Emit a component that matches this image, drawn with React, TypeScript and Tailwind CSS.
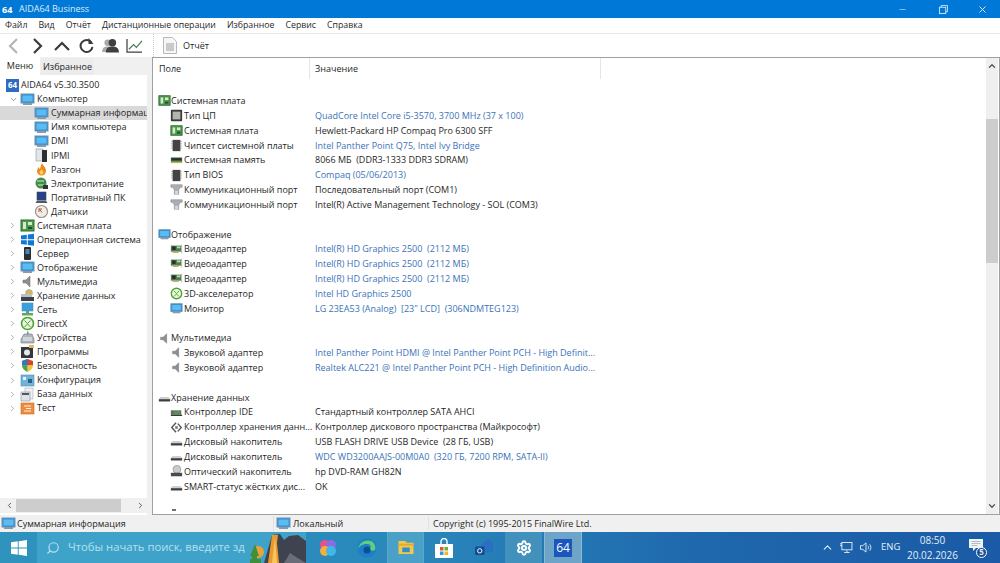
import { ChevronDown, ChevronLeft, ChevronRight, ChevronUp, Search, Settings, X, Minus } from "lucide-react";

type IconKind =
  | "pc" | "board" | "cpu" | "chip" | "ram" | "port" | "gpu" | "xbox" | "sound"
  | "hdd" | "ide" | "ctrl" | "dvd" | "win" | "server" | "fire" | "power" | "laptop"
  | "gauge" | "ipmi" | "storage" | "net" | "device" | "prog" | "shield" | "conf" | "db" | "test";

function TreeIcon({ kind, small }: { kind: IconKind; small?: boolean }) {
  const box = small ? "w-[13px] h-[13px] shrink-0" : "w-[15px] h-[15px] shrink-0";
  switch (kind) {
    case "pc":
      return (
        <svg viewBox="0 0 15 15" className={box}>
          <rect x="1" y="2" width="13" height="9" fill="#2f8fd8" stroke="#6f93b0" />
          <rect x="2.500" y="3.500" width="10" height="6" fill="#5cbcf2" />
          <rect x="3" y="11" width="9" height="2" fill="#8b9aa6" />
        </svg>
      );
    case "board":
      return (
        <svg viewBox="0 0 15 15" className={box}>
          <rect x="1" y="2" width="13" height="11" fill="#4c9a4c" stroke="#2e6b2e" />
          <rect x="3" y="4" width="3" height="7" fill="#d6e8cf" />
          <rect x="8" y="4" width="4" height="3" fill="#d6e8cf" />
          <rect x="8" y="9" width="4" height="2" fill="#1f4f2a" />
        </svg>
      );
    case "cpu":
      return (
        <svg viewBox="0 0 15 15" className={box}>
          <rect x="1" y="1" width="13" height="13" rx="1" fill="#3a3a3a" />
          <rect x="3" y="3" width="9" height="9" fill="#b5b5b0" />
        </svg>
      );
    case "chip":
      return (
        <svg viewBox="0 0 15 15" className={box}>
          <rect x="3" y="1" width="9" height="13" fill="#444" />
          <path d="M1.500 3h1.500M1.500 5.500h1.500M1.500 8h1.500M1.500 10.500h1.500M12 3h1.500M12 5.500h1.500M12 8h1.500M12 10.500h1.500" stroke="#888" />
        </svg>
      );
    case "ram":
      return (
        <svg viewBox="0 0 15 15" className={box}>
          <rect x="1" y="4" width="13" height="5" fill="#2e6b35" />
          <rect x="2" y="5" width="11" height="2" fill="#2b2b2b" />
          <rect x="1" y="9" width="13" height="1.500" fill="#c9b04a" />
        </svg>
      );
    case "port":
      return (
        <svg viewBox="0 0 15 15" className={box}>
          <path d="M1 2h13v3h-2l-2 3v5H5V8L3 5H1z" fill="#a8aeb3" stroke="#7d858c" strokeWidth="0.600" />
          <rect x="6" y="9" width="3" height="4" fill="#d9dcdf" />
        </svg>
      );
    case "gpu":
      return (
        <svg viewBox="0 0 15 15" className={box}>
          <rect x="1" y="3" width="12" height="7" fill="#4f7f52" />
          <rect x="2.500" y="4" width="4" height="4" fill="#2b2b2b" />
          <rect x="8" y="4" width="4" height="2" fill="#c6d4b8" />
          <rect x="13" y="2" width="1" height="10" fill="#aab0b5" />
          <rect x="3" y="10" width="7" height="1.500" fill="#c9b04a" />
        </svg>
      );
    case "xbox":
      return (
        <svg viewBox="0 0 15 15" className={box}>
          <circle cx="7.500" cy="7.500" r="6" fill="#e8f5e0" stroke="#4aa52e" strokeWidth="1.600" />
          <path d="M4.500 4.500 7.500 7.500 10.500 4.500M4.500 11 7.500 8l3 3" stroke="#4aa52e" fill="none" />
        </svg>
      );
    case "sound":
      return (
        <svg viewBox="0 0 15 15" className={box}>
          <path d="M3 6h3l4-4v11l-4-4H3z" fill="#8e8e8e" stroke="#6b6b6b" strokeWidth="0.500" />
        </svg>
      );
    case "hdd":
      return (
        <svg viewBox="0 0 15 15" className={box}>
          <path d="M3 7h9l2 2v3H1V9z" fill="#cfcfcf" />
          <rect x="1" y="9.500" width="13" height="2.500" fill="#3e3e3e" />
        </svg>
      );
    case "ide":
      return (
        <svg viewBox="0 0 15 15" className={box}>
          <rect x="1" y="5" width="12" height="5" fill="#666" />
          <rect x="4" y="6" width="8" height="3" fill="#4c9a4c" />
          <rect x="1" y="10" width="13" height="1.500" fill="#333" />
        </svg>
      );
    case "ctrl":
      return (
        <svg viewBox="0 0 15 15" className={box}>
          <path d="M7 2 2 7.500 7 13M9 3l4 4.500L9 12" stroke="#555" strokeWidth="1.600" fill="none" />
          <rect x="6" y="6" width="3" height="3" fill="#777" />
        </svg>
      );
    case "dvd":
      return (
        <svg viewBox="0 0 15 15" className={box}>
          <circle cx="8" cy="5" r="4.500" fill="#c9ccd0" stroke="#9a9ea3" />
          <rect x="1" y="9" width="13" height="4" fill="#4a4a4a" />
        </svg>
      );
    case "win":
      return (
        <svg viewBox="0 0 15 15" className={box}>
          <path d="M1 3.500 6.800 2.700v4.500H1zM7.800 2.500 14 1.700v5.500H7.800zM1 8.200h5.800v4.500L1 11.900zM7.800 8.200H14v5.500l-6.200-.8z" fill="#0f78d4" />
        </svg>
      );
    case "server":
      return (
        <svg viewBox="0 0 15 15" className={box}>
          <rect x="4" y="1" width="7" height="13" rx="1" fill="#2d2f33" />
          <rect x="5.500" y="3" width="4" height="5" fill="#4d86b5" />
        </svg>
      );
    case "fire":
      return (
        <svg viewBox="0 0 15 15" className={box}>
          <path d="M8 1c1 3 4 4 4 8a4.500 4.500 0 0 1-9 0c0-2 1-3 2-4 0 1 .5 2 1 2 .5-2 1-4 2-6z" fill="#ee8a1d" />
          <path d="M7.500 7c.5 1.500 2 2 2 3.500a2 2 0 0 1-4 0c0-1.500 1.500-2 2-3.500z" fill="#f7cf5a" />
        </svg>
      );
    case "power":
      return (
        <svg viewBox="0 0 15 15" className={box}>
          <circle cx="7" cy="7" r="5.500" fill="#3f8f45" />
          <path d="M3 5h7M4 9h6" stroke="#d8e8cf" />
          <rect x="9" y="9" width="5" height="4" fill="#333" />
        </svg>
      );
    case "laptop":
      return (
        <svg viewBox="0 0 15 15" className={box}>
          <rect x="3" y="2" width="9" height="8" fill="#25408f" stroke="#444" strokeWidth="0.600" />
          <path d="M1.500 13 3 10.500h9l1.500 2.500z" fill="#555a66" />
        </svg>
      );
    case "gauge":
      return (
        <svg viewBox="0 0 15 15" className={box}>
          <circle cx="7.500" cy="7.500" r="6" fill="#f1ede6" stroke="#9c9488" strokeWidth="1.200" />
          <path d="M5 4.500 8 8.500M5 8V5h3" stroke="#a8584a" fill="none" />
        </svg>
      );
    case "ipmi":
      return (
        <svg viewBox="0 0 15 15" className={box}>
          <rect x="2" y="1" width="7" height="12" fill="#e4e7ea" stroke="#8b9299" strokeWidth="0.600" />
          <rect x="8" y="2" width="5" height="12" fill="#2c3035" />
        </svg>
      );
    case "storage":
      return (
        <svg viewBox="0 0 15 15" className={box}>
          <circle cx="9" cy="5" r="3.500" fill="#d7b75a" stroke="#99a" strokeWidth="0.500" />
          <rect x="1" y="6" width="11" height="3" fill="#b9c0c7" />
          <rect x="1" y="9" width="13" height="4" fill="#3e4247" />
        </svg>
      );
    case "net":
      return (
        <svg viewBox="0 0 15 15" className={box}>
          <rect x="2" y="1" width="11" height="8" fill="#39a0e0" stroke="#5c8bad" strokeWidth="0.600" />
          <rect x="6" y="9" width="3" height="2" fill="#7c8b96" />
          <rect x="2" y="11" width="11" height="2.500" fill="#5fa860" />
        </svg>
      );
    case "device":
      return (
        <svg viewBox="0 0 15 15" className={box}>
          <path d="M1 9 4 4h8l2 5v4H1z" fill="#aeb6bd" stroke="#737b83" strokeWidth="0.600" />
          <path d="M3 8h9M3 10h9" stroke="#f2f4f5" />
          <rect x="7" y="1.500" width="1.500" height="3" fill="#808890" />
        </svg>
      );
    case "prog":
      return (
        <svg viewBox="0 0 15 15" className={box}>
          <rect x="1" y="3" width="12" height="11" fill="#34373c" />
          <circle cx="7" cy="8.500" r="3" fill="#e6e9ec" />
          <rect x="9" y="1" width="5" height="3" fill="#e3b85f" />
        </svg>
      );
    case "shield":
      return (
        <svg viewBox="0 0 15 15" className={box}>
          <path d="M7.500 1 13 3v4.500H2V3z" fill="#d8452d" />
          <path d="M7.500 1v6.500H2V3z" fill="#2e79c7" />
          <path d="M7.500 7.500H13c0 3-2.500 5.100-5.500 6.500z" fill="#f0c53a" />
          <path d="M2 7.500h5.500V14C4.500 12.600 2 10.500 2 7.500z" fill="#4aa34a" />
        </svg>
      );
    case "conf":
      return (
        <svg viewBox="0 0 15 15" className={box}>
          <rect x="1" y="2" width="13" height="11" fill="#6db4df" stroke="#5a8aa8" strokeWidth="0.600" />
          <rect x="3" y="4" width="3" height="3" fill="#eaf4fa" />
          <rect x="8" y="6" width="4" height="4" fill="#2d5f87" />
        </svg>
      );
    case "db":
      return (
        <svg viewBox="0 0 15 15" className={box}>
          <rect x="5" y="1" width="8" height="11" fill="#eef0f2" stroke="#a9adb2" strokeWidth="0.600" />
          <rect x="1" y="5" width="9" height="9" fill="#dfe3e7" stroke="#8b9096" strokeWidth="0.600" />
          <rect x="2" y="6" width="7" height="2" fill="#4f5a66" />
        </svg>
      );
    default:
      return (
        <svg viewBox="0 0 15 15" className={box}>
          <rect x="1" y="2" width="13" height="11" fill="#f08a3c" stroke="#d06a20" strokeWidth="0.600" />
          <path d="M4 5h7M6 7.500h5M4 10h7" stroke="#fff3e3" />
        </svg>
      );
  }
}

const subItems: [IconKind, string][] = [
  ["pc", "Суммарная информация"],
  ["pc", "Имя компьютера"],
  ["pc", "DMI"],
  ["ipmi", "IPMI"],
  ["fire", "Разгон"],
  ["power", "Электропитание"],
  ["laptop", "Портативный ПК"],
  ["gauge", "Датчики"],
];

const topItems: [IconKind, string][] = [
  ["board", "Системная плата"],
  ["win", "Операционная система"],
  ["server", "Сервер"],
  ["pc", "Отображение"],
  ["sound", "Мультимедиа"],
  ["storage", "Хранение данных"],
  ["net", "Сеть"],
  ["xbox", "DirectX"],
  ["device", "Устройства"],
  ["prog", "Программы"],
  ["shield", "Безопасность"],
  ["conf", "Конфигурация"],
  ["db", "База данных"],
  ["test", "Тест"],
];

type Row = { icon: IconKind; field: string; value: string; link?: boolean };
type Section = { icon: IconKind; title: string; rows: Row[] };

const sections: Section[] = [
  {
    icon: "board",
    title: "Системная плата",
    rows: [
      { icon: "cpu", field: "Тип ЦП", value: "QuadCore Intel Core i5-3570, 3700 MHz (37 x 100)", link: true },
      { icon: "board", field: "Системная плата", value: "Hewlett-Packard HP Compaq Pro 6300 SFF" },
      { icon: "chip", field: "Чипсет системной платы", value: "Intel Panther Point Q75, Intel Ivy Bridge", link: true },
      { icon: "ram", field: "Системная память", value: "8066 МБ  (DDR3-1333 DDR3 SDRAM)" },
      { icon: "chip", field: "Тип BIOS", value: "Compaq (05/06/2013)", link: true },
      { icon: "port", field: "Коммуникационный порт", value: "Последовательный порт (COM1)" },
      { icon: "port", field: "Коммуникационный порт", value: "Intel(R) Active Management Technology - SOL (COM3)" },
    ],
  },
  {
    icon: "pc",
    title: "Отображение",
    rows: [
      { icon: "gpu", field: "Видеоадаптер", value: "Intel(R) HD Graphics 2500  (2112 МБ)", link: true },
      { icon: "gpu", field: "Видеоадаптер", value: "Intel(R) HD Graphics 2500  (2112 МБ)", link: true },
      { icon: "gpu", field: "Видеоадаптер", value: "Intel(R) HD Graphics 2500  (2112 МБ)", link: true },
      { icon: "xbox", field: "3D-акселератор", value: "Intel HD Graphics 2500", link: true },
      { icon: "pc", field: "Монитор", value: "LG 23EA53 (Analog)  [23\" LCD]  (306NDMTEG123)", link: true },
    ],
  },
  {
    icon: "sound",
    title: "Мультимедиа",
    rows: [
      { icon: "sound", field: "Звуковой адаптер", value: "Intel Panther Point HDMI @ Intel Panther Point PCH - High Definit...", link: true },
      { icon: "sound", field: "Звуковой адаптер", value: "Realtek ALC221 @ Intel Panther Point PCH - High Definition Audio...", link: true },
    ],
  },
  {
    icon: "hdd",
    title: "Хранение данных",
    rows: [
      { icon: "ide", field: "Контроллер IDE", value: "Стандартный контроллер SATA AHCI" },
      { icon: "ctrl", field: "Контроллер хранения данн...", value: "Контроллер дискового пространства (Майкрософт)" },
      { icon: "hdd", field: "Дисковый накопитель", value: "USB FLASH DRIVE USB Device  (28 ГБ, USB)" },
      { icon: "hdd", field: "Дисковый накопитель", value: "WDC WD3200AAJS-00M0A0  (320 ГБ, 7200 RPM, SATA-II)", link: true },
      { icon: "dvd", field: "Оптический накопитель", value: "hp DVD-RAM GH82N" },
      { icon: "hdd", field: "SMART-статус жёстких дис...", value: "OK" },
    ],
  },
];

const menuItems = ["Файл", "Вид", "Отчёт", "Дистанционные операции", "Избранное", "Сервис", "Справка"];

function Logo64({ className }: { className: string }) {
  return <div className={`flex items-center justify-center font-bold ${className}`}>64</div>;
}

function TreeNav() {
  return (
    <div className="flex w-[147px] flex-col">
      <div className="flex h-[18px] items-end">
        <div className="flex h-[18px] w-[40px] items-center justify-center bg-white">Меню</div>
        <div className="ml-[1px] flex h-[17px] w-[53px] items-center justify-center bg-[#ececec]">Избранное</div>
      </div>
      <div className="flex min-h-0 flex-1 flex-col bg-white">
        <div className="min-h-0 flex-1 overflow-hidden pt-[3px]">
          <div className="flex h-[14.050px] items-center gap-[1px] pl-[6px]">
            <Logo64 className="h-[13px] w-[13px] bg-[#2d6cc0] text-[8px] text-white" />
            <span className="pl-[1px]">AIDA64 v5.30.3500</span>
          </div>
          <div className="flex h-[14.050px] items-center pl-[9px]">
            <ChevronDown size={9} strokeWidth={1.500} className="mr-[2px] text-gray-600" />
            <TreeIcon kind="pc" />
            <span className="pl-[2px]">Компьютер</span>
          </div>
          {subItems.map(([icon, label], i) => (
            <div key={label} className={`flex h-[14.050px] items-center pl-[34px] ${i === 0 ? "bg-[#d9d9d9]" : ""}`}>
              <TreeIcon kind={icon} />
              <span className="overflow-hidden whitespace-nowrap pl-[2px]">{label}</span>
            </div>
          ))}
          {topItems.map(([icon, label]) => (
            <div key={label} className="flex h-[14.050px] items-center whitespace-nowrap pl-[8px]">
              <ChevronRight size={9} strokeWidth={1.500} className="mr-[3px] text-gray-500" />
              <TreeIcon kind={icon} />
              <span className="pl-[2px]">{label}</span>
            </div>
          ))}
        </div>
        <div className="mb-[2px] flex h-[15px] items-center bg-[#f0f0f0] text-gray-600">
          <ChevronLeft size={9} strokeWidth={2.500} className="ml-[5px]" />
          <div className="ml-[2px] h-[13px] w-[105px] bg-[#cdcdcd]" />
          <ChevronRight size={9} strokeWidth={2.500} className="ml-auto mr-[2px]" />
        </div>
      </div>
    </div>
  );
}

function ReportTable() {
  return (
    <div className="ml-[5px] flex min-w-0 flex-1 border border-[#a0a0a0] bg-white">
      <div className="min-w-0 flex-1 overflow-hidden">
        <div className="flex h-[21px] items-center">
          <div className="w-[157px] border-r border-[#e5e5e5] pl-[6px] leading-[21px]">Поле</div>
          <div className="w-[291px] border-r border-[#e5e5e5] pl-[5px] leading-[21px]">Значение</div>
        </div>
        <div className="pt-[14.500px]">
          {sections.map((s) => (
            <div key={s.title} className="mb-[14.800px]">
              <div className="flex h-[14.830px] items-center pl-[5px]">
                <TreeIcon kind={s.icon} small />
                <span>{s.title}</span>
              </div>
              {s.rows.map((r, i) => (
                <div key={i} className="flex h-[14.830px] items-center whitespace-nowrap">
                  <div className="flex w-[162px] items-center pl-[17px]">
                    <TreeIcon kind={r.icon} small />
                    <span className="pl-[1px]">{r.field}</span>
                  </div>
                  <span className={`whitespace-pre ${r.link ? "text-[#3a73b8]" : ""}`}>{r.value}</span>
                </div>
              ))}
            </div>
          ))}
          <div className="ml-[19px] mt-[4px] h-[2px] w-[4px] bg-gray-500" />
        </div>
      </div>
      <div className="flex w-[12px] flex-col items-center bg-[#efefef]">
        <ChevronUp size={10} strokeWidth={3} className="mt-[3px] text-gray-600" />
        <div className="mt-[48px] h-[144px] w-full bg-[#cdcdcd]" />
        <ChevronDown size={10} strokeWidth={3} className="mb-[3px] mt-auto text-gray-600" />
      </div>
      <div className="w-[1px] bg-white" />
    </div>
  );
}

function Taskbar() {
  return (
    <div className="flex h-[31px] items-center bg-[linear-gradient(90deg,#2f93bd_0%,#2a88bb_40%,#1f68ad_70%,#1a5aa6_100%)] text-white">
      <div className="flex w-[37px] justify-center">
        <svg viewBox="0 0 16 16" className="h-[16px] w-[16px]">
          <path d="M0 2.300 6.800 1.300v6.300H0zM7.700 1.200 16 0v7.600H7.700zM0 8.400h6.800v6.300L0 13.700zM7.700 8.400H16V16l-8.300-1.200z" fill="#fff" />
        </svg>
      </div>
      <div className="flex h-full w-[269px] items-center overflow-hidden bg-[#3fa3c9] pl-[9px] text-[11.250px] text-[#b5e0ef]">
        <Search size={14} className="mr-[8px] -scale-x-100" />
        <span className="whitespace-nowrap">Чтобы начать поиск, введите зд</span>
      </div>
      <svg viewBox="0 0 56 31" className="-ml-[56px] h-[31px] w-[56px] shrink-0">
        <path d="M14 31 22 3l8-1 4 6 5-4 9-1 8 6v22z" fill="#3f4350" />
        <path d="M22 3h6l-1 8 2 20H18z" fill="#e89a2e" />
        <path d="M25 5l2 26h-5z" fill="#f6c65a" />
        <circle cx="8" cy="20" r="6" fill="#e8a33a" />
        <path d="M5 12 9 24H7v3h4v4H-1v-4h3v-3H0z" fill="#3f8f3a" />
        <path d="M34 31l6-10 6 4 10 6z" fill="#6a6c78" />
      </svg>
      <div className="ml-[13px] flex h-full items-center">
        <svg viewBox="0 0 18 18" className="h-[18px] w-[18px]">
          <circle cx="6" cy="6" r="5" fill="#e94f8a" />
          <circle cx="12" cy="6" r="5" fill="#8a6ee0" />
          <circle cx="6" cy="12" r="5" fill="#f2b13a" />
          <circle cx="12" cy="12" r="5" fill="#3fb8e8" />
        </svg>
        <svg viewBox="0 0 20 20" className="ml-[20px] h-[20px] w-[20px]">
          <circle cx="10" cy="10" r="9.500" fill="#1c7fc9" />
          <path d="M1 11C2 4 9 1 14 3c4 2 5 6 4 9-1 1-5 1-6-1 3-2 2-5-2-5-4 0-8 2-9 5z" fill="#5ed07a" />
          <circle cx="10" cy="12" r="3.500" fill="#0f4f90" />
        </svg>
        <div className="ml-[10px] flex h-full w-[37px] items-center justify-center border-x border-[#5aa7cb] bg-[#4ba0c8]">
          <svg viewBox="0 0 18 16" className="h-[15px] w-[18px]">
            <path d="M1 1h7l2 2h7v12H1z" fill="#f0c84a" />
            <rect x="5" y="8" width="8" height="5" fill="#2f8fc8" />
            <rect x="1" y="4" width="16" height="2" fill="#e5a92e" />
          </svg>
        </div>
        <svg viewBox="0 0 18 20" className="ml-[11px] h-[20px] w-[18px]">
          <path d="M6 6V3.500a3 3 0 0 1 6 0V6" stroke="#fff" fill="none" strokeWidth="1.400" />
          <rect x="0" y="6" width="18" height="14" fill="#fff" />
          <rect x="5" y="9" width="3.500" height="3.500" fill="#e8532b" />
          <rect x="9.500" y="9" width="3.500" height="3.500" fill="#6ab42d" />
          <rect x="5" y="13.500" width="3.500" height="3.500" fill="#2d9be0" />
          <rect x="9.500" y="13.500" width="3.500" height="3.500" fill="#f2b62b" />
        </svg>
        <svg viewBox="0 0 20 20" className="ml-[22px] h-[19px] w-[19px]">
          <path d="M7 7 14 1l5 4v10H7z" fill="#2a6fc2" />
          <rect x="0" y="9" width="10" height="9" rx="1.500" fill="#0f4f90" />
          <circle cx="5" cy="13.500" r="2.300" fill="none" stroke="#fff" />
        </svg>
        <div className="ml-[11px] flex h-full w-[37px] items-center justify-center bg-[#4290bc]">
          <Settings size={16} strokeWidth={3} />
        </div>
        <div className="ml-[2px] flex h-full w-[38px] items-center justify-center border-x border-[#8ab8d5] bg-[#6fa4c9]">
          <Logo64 className="h-[18px] w-[18px] bg-[#1a56bd] text-[12px] font-normal text-white" />
        </div>
      </div>
      <div className="ml-auto flex h-full items-center text-[#e3eef7]">
        <ChevronUp size={13} />
        <svg viewBox="0 0 14 12" className="ml-[5px] h-[11px] w-[14px]">
          <rect x="2.500" y="0.500" width="11" height="8" fill="none" stroke="#e3eef7" />
          <path d="M8 9v2M5 11.500h6M0.500 2h2M0.500 4h2" stroke="#e3eef7" />
        </svg>
        <svg viewBox="0 0 14 12" className="ml-[6px] h-[11px] w-[14px]">
          <path d="M1 4h2.500L7 1v10L3.500 8H1zM9 4c1 1 1 3 0 4M11 2.500c1.800 2 1.800 5 0 7" fill="none" stroke="#e3eef7" />
        </svg>
        <span className="ml-[8px] w-[20px] text-[9.500px]">ENG</span>
        <div className="ml-[8px] flex w-[47px] flex-col items-center text-[10px] leading-[15px]">
          <span>08:50</span>
          <span>20.02.2026</span>
        </div>
        <div className="relative ml-[13px] mr-[13px] h-[20px] w-[18px]">
          <svg viewBox="0 0 14 14" className="h-[14px] w-[14px]">
            <path d="M0 1h14v9H7l-3 3v-3H0z" fill="#f1f5f8" />
            <path d="M2.500 3.500h9M2.500 5.500h9M2.500 7.500h6" stroke="#8ca4b8" strokeWidth="0.700" />
          </svg>
          <div className="absolute bottom-0 right-0 flex h-[11px] w-[11px] items-center justify-center rounded-full border border-white bg-[#1a4f95] text-[8px] font-bold">5</div>
        </div>
      </div>
    </div>
  );
}

export default function App() {
  return (
    <div className="flex h-[563px] w-[1000px] flex-col overflow-hidden bg-[#f0f0f0] font-['Open_Sans','Noto_Sans',sans-serif] text-[9px] text-[#1f1f1f]">
      {/* заголовок окна */}
      <div className="flex h-[18px] items-center bg-[#0078d7] text-white">
        <div className="w-[13px] pl-[2px] text-[9px] font-bold leading-none">64</div>
        <span className="ml-[6px] text-[9px] text-[#dcecf9]">AIDA64 Business</span>
        <Minus size={9} className="ml-auto text-[#a9d3f2]" />
        <svg viewBox="0 0 10 10" className="ml-[32px] h-[9px] w-[9px]">
          <rect x="0.500" y="2.500" width="7" height="7" fill="none" stroke="#d5e9f8" />
          <path d="M2.500 2.500V.5h7v7h-2" fill="none" stroke="#d5e9f8" />
        </svg>
        <X size={11} className="ml-[29px] mr-[12px] text-[#e5f1fb]" />
      </div>

      <div className="flex h-[15px] items-center gap-[11px] bg-white pl-[5px] text-[8.750px]">
        {menuItems.map((m) => (
          <span key={m}>{m}</span>
        ))}
      </div>

      {/* панель инструментов */}
      <div className="flex h-[24px] items-center border-t border-[#e8e8e8] bg-white">
        <div className="flex w-[153px] items-center pl-[8px] text-[#3a3a3a]">
          <svg viewBox="0 0 10 16" className="h-[16px] w-[10px]">
            <path d="M9 1 2 8l7 7" fill="none" stroke="#b5b5b5" strokeWidth="2.200" />
          </svg>
          <svg viewBox="0 0 10 16" className="ml-[15px] h-[16px] w-[10px]">
            <path d="M1 1l7 7-7 7" fill="none" stroke="#3a3a3a" strokeWidth="2.200" />
          </svg>
          <svg viewBox="0 0 16 10" className="ml-[11px] h-[10px] w-[16px]">
            <path d="M1 9l7-7 7 7" fill="none" stroke="#3a3a3a" strokeWidth="2.200" />
          </svg>
          <svg viewBox="0 0 15 15" className="ml-[9px] h-[15px] w-[15px]">
            <path d="M12.500 4.500A6 6 0 1 0 13.500 9" fill="none" stroke="#3a3a3a" strokeWidth="2" />
            <path d="M9.500 0v6h5z" fill="#3a3a3a" />
          </svg>
          <svg viewBox="0 0 18 16" className="ml-[8px] h-[15px] w-[17px]">
            <circle cx="6" cy="5" r="3.500" fill="#a9a9a9" />
            <path d="M0 15c0-5 3-6 6-6s6 1 6 6z" fill="#a9a9a9" />
            <circle cx="11" cy="5" r="4" fill="#3f3f3f" />
            <path d="M4 15.500c0-5 3-6.500 7-6.500s7 1.500 7 6.500z" fill="#3f3f3f" />
          </svg>
          <svg viewBox="0 0 18 16" className="ml-[7px] h-[15px] w-[17px]">
            <path d="M1 1v14h16" fill="none" stroke="#3f3f3f" strokeWidth="1.300" />
            <path d="M3 12 8 7l3 3 6-7" fill="none" stroke="#4c7a52" strokeWidth="1.300" />
          </svg>
        </div>
        <div className="flex h-full items-center border-l border-dotted border-[#c8c8c8] pl-[9px]">
          <svg viewBox="0 0 14 17" className="h-[17px] w-[14px]">
            <path d="M.5.5h9l4 4v12H.5z" fill="#f6f6f6" stroke="#b9b9b9" />
            <rect x="3" y="6" width="8" height="8" fill="#c9c9c9" />
          </svg>
          <span className="pl-[6px]">Отчёт</span>
        </div>
      </div>

      <div className="flex min-h-0 flex-1">
        <TreeNav />
        <ReportTable />
      </div>

      {/* строка состояния */}
      <div className="flex h-[17px] items-center">
        <div className="flex w-[273px] items-center pl-[1px]">
          <TreeIcon kind="pc" />
          <span className="pl-[1px]">Суммарная информация</span>
        </div>
        <div className="flex w-[155px] items-center border-l border-[#e0e0e0] pl-[2px]">
          <TreeIcon kind="pc" />
          <span className="pl-[2px]">Локальный</span>
        </div>
        <div className="border-l border-[#e0e0e0] pl-[4px]">Copyright (c) 1995-2015 FinalWire Ltd.</div>
      </div>

      <Taskbar />
    </div>
  );
}
